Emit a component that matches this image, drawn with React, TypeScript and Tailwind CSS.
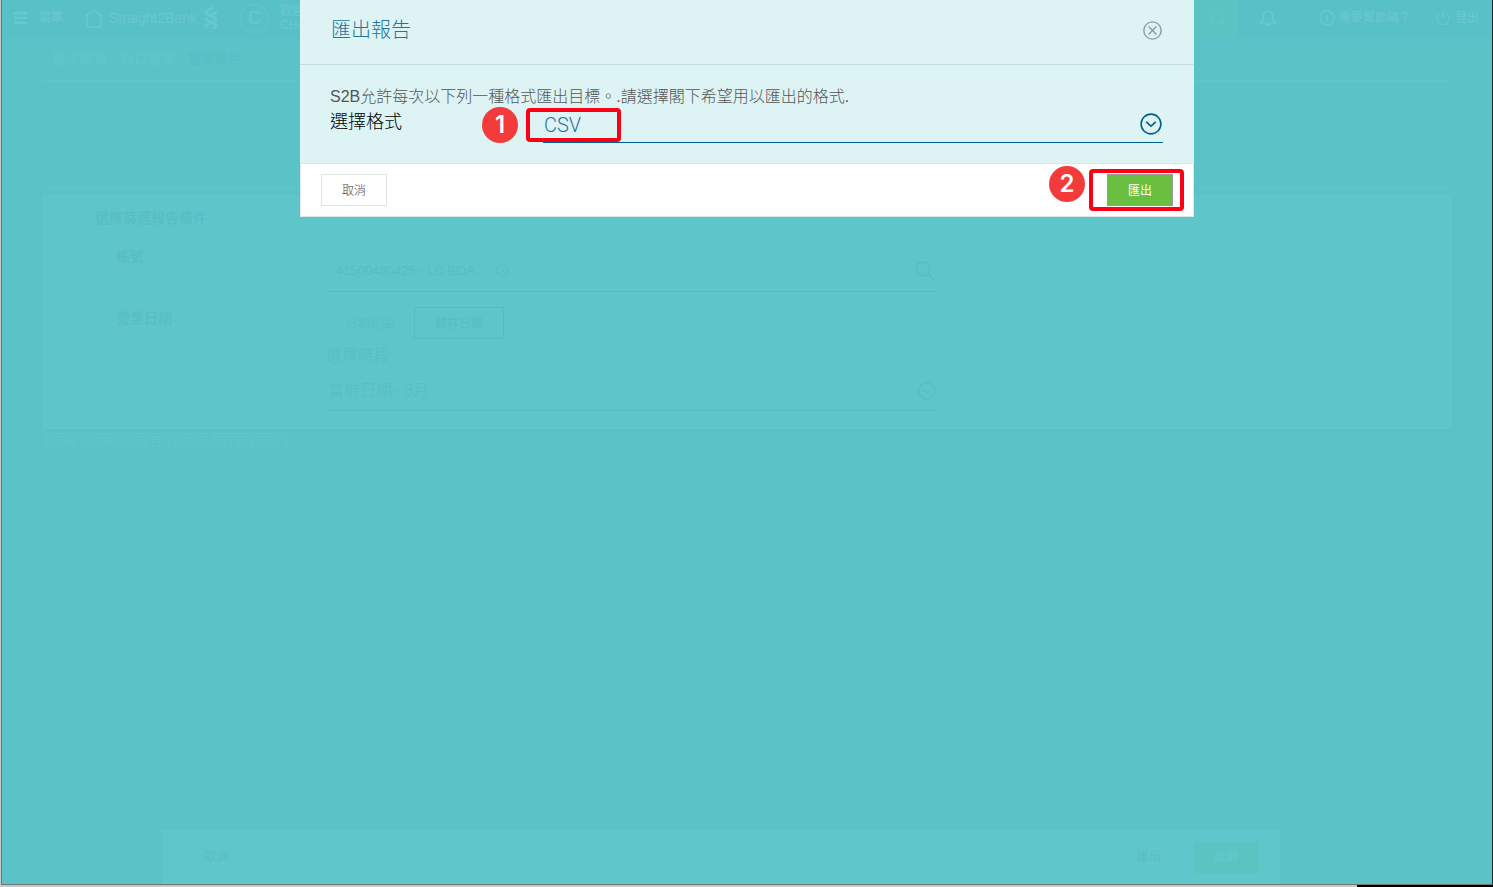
import { useState, type ReactNode } from 'react';
import { Power } from 'lucide-react';

const FORMATS = ['CSV', 'PDF', 'XLS'];

function CircleChevron({ className }: { className?: string }) {
  return (
    <svg viewBox="0 0 22 22" fill="none" stroke="currentColor" className={className} aria-hidden="true">
      <circle cx="11" cy="11" r="9.9" strokeWidth="1.6" />
      <path d="M6.2 8.8 11 13.2l4.8-4.4" strokeWidth="1.6" />
    </svg>
  );
}

function CircleCross({ className }: { className?: string }) {
  return (
    <svg viewBox="0 0 18 18" fill="none" stroke="currentColor" className={className} aria-hidden="true">
      <circle cx="9" cy="9" r="8.2" strokeWidth="1.3" />
      <path d="m5.3 5.3 7.4 7.4M12.7 5.3l-7.4 7.4" strokeWidth="1.3" />
    </svg>
  );
}

function Magnifier({ className }: { className?: string }) {
  return (
    <svg viewBox="0 0 20 20" fill="none" stroke="currentColor" strokeWidth="1.6" className={className} aria-hidden="true">
      <circle cx="8" cy="8" r="7" />
      <path d="m13 13 6.3 6.3" />
    </svg>
  );
}

function StepBadge({ className, children }: { className: string; children: ReactNode }) {
  return (
    <span className={`absolute flex h-9 w-9 items-center justify-center rounded-full bg-[#f33b3b] font-['Inter',sans-serif] text-[24px] leading-none font-semibold text-white ${className}`}>
      {children}
    </span>
  );
}

function TopBar() {
  return (
    <header className="flex h-[38px] shrink-0 items-center bg-[#58c0c7] text-xs font-medium text-[#68c8cf]">
      <button className="flex h-full w-[72px] items-center gap-3 border-r border-[#56bec5] pb-[2px] pl-3">
        <svg viewBox="0 0 13 12" className="h-3 w-[13px]" fill="currentColor" aria-hidden="true">
          <path d="M0 0h13v2.6H0zM0 4.7h13v2.6H0zM0 9.4h13V12H0z" />
        </svg>
        菜單
      </button>
      <a href="#home" className="flex h-full w-[156px] items-center border-r border-[#56bec5] pb-[2px] pl-[10px] text-sm font-normal">
        <svg viewBox="0 0 20 19" className="mr-[5px] h-[19px] w-5" fill="none" stroke="currentColor" strokeWidth="1.6" aria-hidden="true">
          <path d="M1 7.5 10 1l9 6.5M3.3 6v12h13.4V6" />
        </svg>
        Straight2Bank
        <svg viewBox="0 0 16 24" className="ml-[6px] h-6 w-4" fill="none" stroke="currentColor" strokeWidth="2.6" strokeLinejoin="round" aria-hidden="true">
          <path d="M10 1.5 3 5.5v2l10 5v2L8 17" />
          <path d="M14 5.5 8.500 8.500M1.500 12.500 6 15l7 4v1.500L10 22.500M6.500 17.500 1.500 21" />
        </svg>
      </a>
      <div className="flex items-center gap-[11px] pb-[2px] pl-[10px]">
        <span className="flex h-[29px] w-[29px] items-center justify-center rounded-full border border-[#64c7cd] text-lg">C</span>
        <span className="leading-[14px]">歡迎<br />CHA</span>
      </div>
      <div className="ml-auto flex h-full items-center">
        <button aria-label="搜尋" className="flex h-full w-12 items-center justify-center bg-[#5bc4c3] pl-[10px] text-[#62c7c9]">
          <Magnifier className="h-4 w-4" />
        </button>
        <button aria-label="通知" className="flex h-full w-[71px] items-center border-r border-[#56bec5] pb-[2px] pl-[21px]">
          <svg viewBox="0 0 18 18" className="h-[18px] w-[18px]" fill="none" stroke="currentColor" strokeWidth="1.7" aria-hidden="true">
            <path d="M2 14c2-2 2-3 2.200-6C4.500 4 6 2 9 2s4.500 2 4.800 6c.2 3 .2 4 2.200 6zM1 14h16" />
            <path d="M6 15h6c0 3-6 3-6 0z" fill="currentColor" stroke="none" />
          </svg>
        </button>
        <a href="#help" className="flex h-full w-28 items-center gap-1 border-r border-[#56bec5] pb-[2px] pl-[10px]">
          <svg viewBox="0 0 16 16" className="h-4 w-4 shrink-0" fill="none" stroke="currentColor" strokeWidth="1.3" aria-hidden="true">
            <circle cx="8" cy="8" r="7" />
            <path d="M8 4v6M8 11v1.5" />
          </svg>
          需要幫助碼？
        </a>
        <a href="#logout" className="flex h-full w-[71px] items-center gap-1 pb-[2px] pl-[14px]">
          <Power className="h-4 w-4" strokeWidth={1.8} />
          登出
        </a>
      </div>
    </header>
  );
}

function ReportPage() {
  return (
    <main className="px-10 text-[#57bdc3]">
      <div className="flex h-[43px] items-center gap-3 border-b border-[#61c6cb] pl-[10px] text-sm font-medium text-[#61c6cb]">
        <h1>電子帳單 - 戶口帳單</h1>
        <a href="#business" className="text-[13px] text-[#56bec4]">營業帳戶</a>
      </div>

      <div className="h-[107px] border-b border-[#5fc6cb]" />

      <section className="mt-[6px] h-[235px] bg-[#5ec6cb] pt-[14px] shadow-[0_2px_4px_#58c0c6]">
        <h2 className="pl-[53px] text-sm leading-5 font-medium">選擇篩選報告條件</h2>
        <div className="mt-[9px] flex">
          <label htmlFor="account" className="w-[284px] pt-[9px] pl-[74px] text-sm leading-5 font-medium">帳號</label>
          <div className="flex h-[55px] w-[611px] items-center border-b border-[#57bdc4] pt-[13px] pl-[10px] text-[13px]">
            <input id="account" readOnly value="41500480425 - LC BOA..." className="w-[150px] bg-transparent outline-none" />
            <CircleCross className="ml-[10px] h-[13px] w-[13px]" />
            <Magnifier className="mr-[2px] ml-auto h-5 w-5" />
          </div>
        </div>
        <div className="mt-[15px] flex">
          <p className="w-[284px] pt-px pl-[74px] text-sm leading-5 font-medium">營業日期</p>
          <div className="w-[611px]">
            <div className="flex text-xs">
              <button className="h-8 w-[88px] border border-[#5cc4ca] pt-[2px] text-[#59c0c6]">日期範圍</button>
              <button className="h-8 w-[90px] border border-[#56bdc3] pt-[2px]">轉存日期</button>
            </div>
            <label htmlFor="period" className="mt-1 block pt-px text-base leading-6 font-light">選擇時段</label>
            <div className="flex h-[43px] items-center border-b border-[#57bdc4] pt-1 text-base font-light">
              <select id="period" className="w-full appearance-none bg-transparent pl-[2px] font-['Roboto','Noto_Sans_CJK_TC',sans-serif] outline-none">
                <option>當前日期 - 3月</option>
              </select>
              <CircleChevron className="mr-px h-[18px] w-[18px] shrink-0" />
            </div>
          </div>
        </div>
      </section>
      <p className="mt-1 border-t border-[#5fc6cb] text-xs leading-4 text-[#61c6cb]">全部欄位均為必填項目，除非另有訂明 ( 可選 )</p>
    </main>
  );
}

function PageActions() {
  return (
    <footer className="mr-[212px] ml-40 mt-auto flex h-[54px] shrink-0 items-center bg-[#5fc6cb] pr-[21px] pl-[42px] text-xs text-[#59bfc5]">
      <button>取消</button>
      <button className="ml-auto pr-8">匯出</button>
      <button className="h-8 w-[66px] bg-[#5ac4c3] font-medium text-[#64c8c9]">繼續</button>
    </footer>
  );
}

function ExportDialog() {
  const [format, setFormat] = useState('CSV');

  return (
    <div role="dialog" aria-labelledby="export-title" className="relative mx-auto w-[894px] max-w-full">
      <div className="flex h-[65px] items-center justify-between border-b border-[#c3dde1] bg-[#ddf3f4] pr-8 pb-1 pl-[31px]">
        <h2 id="export-title" className="text-xl font-light text-[#24749f]">匯出報告</h2>
        <button aria-label="關閉" className="text-[#8d9a9c]">
          <CircleCross className="h-[19px] w-[19px]" />
        </button>
      </div>

      <div className="h-[98px] bg-[#ddf3f4] pt-5 pr-[31px] pl-[30px]">
        <p className="text-base leading-6 font-light text-[#555]">
          S2B允許每次以下列一種格式匯出目標。.請選擇閣下希望用以匯出的格式.
        </p>
        <div className="flex">
          <label htmlFor="format" className="w-[213px] shrink-0 pt-px text-lg leading-6 font-light text-black">選擇格式</label>
          <div className="relative h-[34px] flex-1 border-b border-[#00628c]">
            <select
              id="format"
              value={format}
              onChange={(e) => setFormat(e.target.value)}
              className="h-8 w-full appearance-none bg-transparent pl-px font-['Roboto',sans-serif] text-xl font-light text-[#24749f] outline-none"
            >
              {FORMATS.map((f) => <option key={f}>{f}</option>)}
            </select>
            <CircleChevron className="pointer-events-none absolute top-1 right-[1px] h-[22px] w-[22px] text-[#00628c]" />
            <span className="pointer-events-none absolute -top-px -left-[17px] h-[34px] w-[95px] rounded border-4 border-[#fc0016]" />
            <StepBadge className="-top-[2px] -left-[61px]">1</StepBadge>
          </div>
        </div>
      </div>

      <div className="flex h-[54px] items-center justify-between border border-[#e2e4e4] bg-white px-5 text-xs">
        <button className="h-8 w-[66px] border border-[#e2e2e2] pt-[2px] font-light text-[#444]">取消</button>
        <div className="relative">
          <button className="h-8 w-[66px] border border-[#999] bg-[#6abe40] pt-[2px] text-white">匯出</button>
          <span className="pointer-events-none absolute -top-[5px] -left-[18px] h-[42px] w-[95px] rounded border-4 border-[#fc0016]" />
          <StepBadge className="-top-2 -left-[58px]">2</StepBadge>
        </div>
      </div>
    </div>
  );
}

export default function App() {
  return (
    <div lang="zh-Hant" className="flex h-screen flex-col bg-[#c8c8c8] pl-px font-['Liberation_Sans','Noto_Sans_CJK_TC',sans-serif]">
      <div className="relative flex min-h-0 flex-1 flex-col overflow-hidden border-r border-b border-l border-r-[#202a2b] border-b-[#6f7374] border-l-[#6f7374] bg-[#5ac3c8]">
        <TopBar />
        <ReportPage />
        <PageActions />
        <div className="absolute inset-0">
          <ExportDialog />
        </div>
      </div>
      <div className="flex h-[2px] shrink-0 justify-end">
        <div className="w-[136px] bg-black" />
      </div>
    </div>
  );
}
